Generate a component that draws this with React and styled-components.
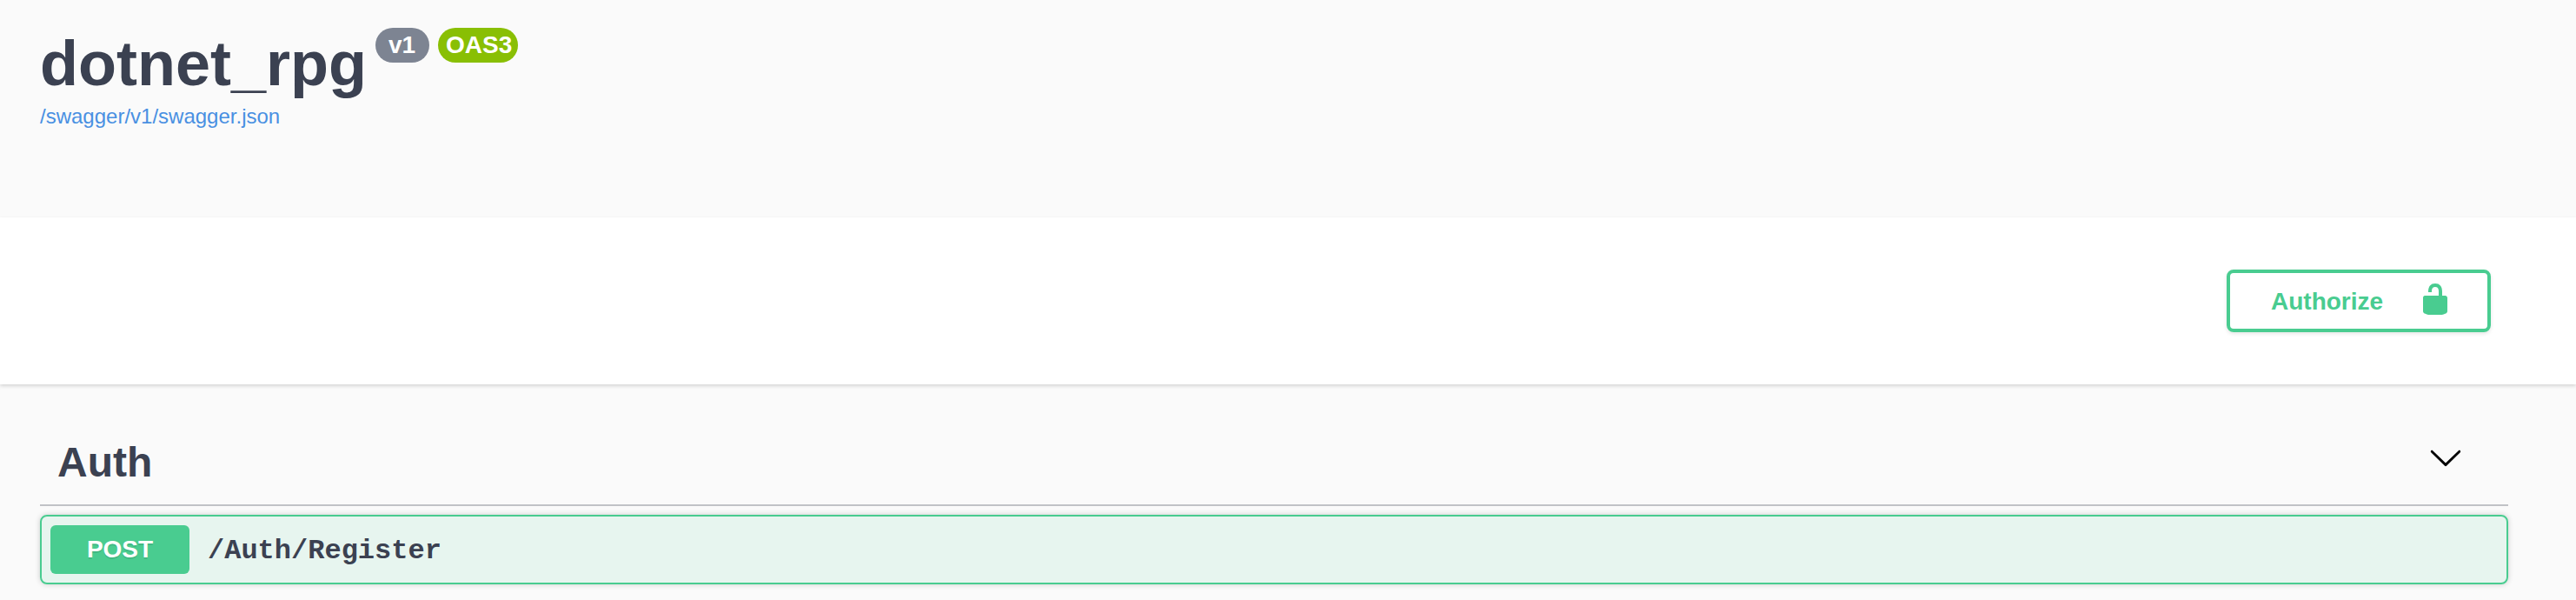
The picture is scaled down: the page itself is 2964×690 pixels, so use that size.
import React from "react";
import styled, { createGlobalStyle } from "styled-components";

const GlobalStyle = createGlobalStyle`
  *, *::before, *::after { box-sizing: border-box; }
  body {
    margin: 0;
    background: #fafafa;
    color: #3b4151;
    font-family: "Liberation Sans", Arial, sans-serif;
  }
`;

const Page = styled.div`
  height: 690px;
  overflow: hidden;
`;

const Info = styled.header`
  height: 250px;
  padding: 32px 46px 0;
`;

const TitleRow = styled.div`
  display: flex;
  align-items: flex-start;
  height: 84px;
`;

const Title = styled.h1`
  margin: 0 10px 0 0;
  width: 376px;
  font-size: 72px;
  line-height: 82px;
  font-weight: 700;
  white-space: nowrap;
`;

const Badge = styled.span`
  width: ${(p) => p.$width}px;
  height: 40px;
  margin-right: 10px;
  padding-left: ${(p) => p.$inset}px;
  border-radius: 20px;
  background: ${(p) => p.$color};
  color: #fff;
  font-size: 28px;
  font-weight: 700;
  line-height: 40px;
`;

const SpecLink = styled.a`
  display: inline-block;
  margin-top: 4px;
  color: #4990e2;
  font-size: 24px;
  line-height: 28px;
  text-decoration: none;
`;

const SchemeBar = styled.section`
  display: flex;
  justify-content: flex-end;
  align-items: flex-start;
  height: 192px;
  padding: 60px 98px 0 0;
  background: #fff;
  box-shadow: 0 2px 4px rgba(0, 0, 0, 0.15);
`;

const AuthorizeButton = styled.button`
  display: flex;
  align-items: flex-start;
  justify-content: space-between;
  width: 304px;
  height: 72px;
  padding: 10px 40px 0 47px;
  border: 4px solid #49cc90;
  border-radius: 8px;
  background: transparent;
  box-shadow: 0 2px 4px rgba(0, 0, 0, 0.1);
  color: #49cc90;
  font: 700 28px/45px "Liberation Sans", Arial, sans-serif;
`;

const Icon = styled.svg`
  display: block;
  width: 40px;
  height: 40px;
  fill: currentColor;
`;

const Operations = styled.main`
  padding: 60px 78px 0 46px;
`;

const TagHeader = styled.div`
  display: flex;
  justify-content: space-between;
  align-items: flex-start;
  height: 80px;
  padding: 0 52px 0 20px;
  border-bottom: 2px solid rgba(59, 65, 81, 0.3);
`;

const TagName = styled.h2`
  margin: 0;
  font-size: 48px;
  line-height: 59px;
  font-weight: 700;
`;

const ExpandButton = styled.button`
  margin: 4px 0 0;
  padding: 0;
  border: 0;
  background: none;
  color: #000;
`;

const OperationBlock = styled.div`
  display: flex;
  align-items: center;
  height: 80px;
  margin-top: 10px;
  padding: 0 10px;
  border: 2px solid #49cc90;
  border-radius: 8px;
  background: rgba(73, 204, 144, 0.1);
  box-shadow: 0 0 6px rgba(0, 0, 0, 0.19);
`;

const Method = styled.span`
  width: 160px;
  height: 56px;
  border-radius: 6px;
  background: #49cc90;
  color: #fff;
  font-size: 28px;
  font-weight: 700;
  line-height: 56px;
  text-align: center;
  text-shadow: 0 2px 0 rgba(0, 0, 0, 0.1);
`;

const Path = styled.span`
  padding: 3px 0 0 21px;
  font-family: Courier, "Liberation Mono", monospace;
  font-size: 32px;
  font-weight: 700;
  line-height: 36px;
`;

function UnlockedIcon() {
  return (
    <Icon viewBox="0 0 20 20" aria-hidden="true">
      <path d="M15.8 8H14V5.6C14 2.703 12.665 1 10 1 7.334 1 6 2.703 6 5.6V6h2v-.801C8 3.754 8.797 3 10 3c1.203 0 2 .754 2 2.199V8H4c-.553 0-1 .646-1 1.199V17c0 .549.428 1.139.951 1.307l1.197.387C5.672 18.861 6.55 19 7.1 19h5.8c.549 0 1.428-.139 1.951-.307l1.196-.387c.524-.167.953-.757.953-1.306V9.199C17 8.646 16.352 8 15.8 8z" />
    </Icon>
  );
}

function ArrowIcon() {
  return (
    <Icon viewBox="0 0 20 20" aria-hidden="true">
      <path d="M17.418 6.109c.272-.268.709-.268.979 0s.271.701 0 .969l-7.908 7.83c-.27.268-.707.268-.979 0l-7.908-7.83c-.27-.268-.27-.701 0-.969.271-.268.709-.268.979 0L10 13.25l7.418-7.141z" />
    </Icon>
  );
}

export default function App() {
  return (
    <>
      <GlobalStyle />
      <Page>
        <Info>
          <TitleRow>
            <Title>dotnet_rpg</Title>
            <Badge $width={62} $inset={15} $color="#7d8492">v1</Badge>
            <Badge $width={92} $inset={9} $color="#89bf04">OAS3</Badge>
          </TitleRow>
          <SpecLink href="#">/swagger/v1/swagger.json</SpecLink>
        </Info>
        <SchemeBar>
          <AuthorizeButton>
            <span>Authorize</span>
            <UnlockedIcon />
          </AuthorizeButton>
        </SchemeBar>
        <Operations>
          <TagHeader>
            <TagName>Auth</TagName>
            <ExpandButton aria-label="Collapse operation">
              <ArrowIcon />
            </ExpandButton>
          </TagHeader>
          <OperationBlock>
            <Method>POST</Method>
            <Path>/Auth/Register</Path>
          </OperationBlock>
        </Operations>
      </Page>
    </>
  );
}
